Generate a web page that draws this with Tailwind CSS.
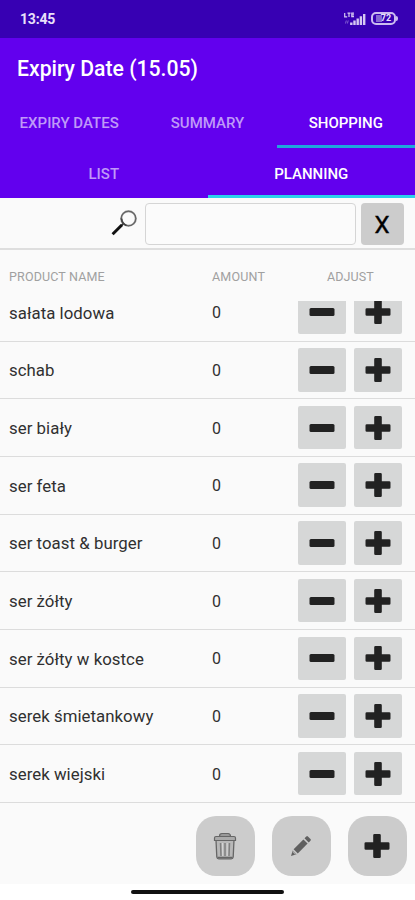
<!DOCTYPE html>
<html lang="pl">
<head>
<meta charset="utf-8">
<title>Expiry Date</title>
<script src="https://cdn.jsdelivr.net/npm/@tailwindcss/browser@4"></script>
</head>
<body class="w-[415px] h-[900px] overflow-hidden bg-white font-['Roboto',sans-serif] text-[#303030]">
<svg class="hidden">
  <symbol id="minus" viewBox="0 0 26 26"><rect x="0.5" y="9" width="25" height="8" rx="1.5" fill="#222"/></symbol>
  <symbol id="plus" viewBox="0 0 26 26"><path d="M10.5 1h5q1.3 0 1.3 1.3V9.200h7.400q1.300 0 1.300 1.300v5q0 1.300-1.300 1.300h-7.400v6.900q0 1.300-1.300 1.300h-5q-1.300 0-1.300-1.300v-6.900H1.800q-1.300 0-1.300-1.300v-5q0-1.300 1.300-1.300h7.400V2.300Q9.200 1 10.500 1z" fill="#222"/></symbol>
</svg>
<div class="flex flex-col h-[900px]">
  <div class="h-[37.500px] shrink-0 bg-[#3700b3] flex items-center justify-between pl-5 pr-[17px] text-[#e9e0fa]">
    <span class="text-[14px] leading-4 font-bold tracking-[-.2px]">13:45</span>
    <div class="flex items-center gap-[5px]">
      <svg class="w-[22px] h-[14px]" viewBox="0 0 22 14" fill="none" stroke="#d6c8f2">
        <path d="M.7 1v3.800h2.500M3.500 1.200h3M5 1v4M10 1.200H7.800v3.400H10M7.800 2.900H10" stroke-width="1.200"/>
        <path d="M1.500 11.500l.8-3M3.400 11.500l.8-3" stroke-width=".8" opacity=".6"/>
        <path d="M7.300 13v-2.500M10.500 13V8.500M13.700 13V6.500M16.900 13V4.300M20.200 13V2" stroke-width="2.400"/>
      </svg>
      <div class="flex items-center">
        <div class="w-[25px] h-[13px] rounded-[5px] border-2 border-[#cbbcf0] bg-[#3700b3] flex items-center justify-center text-[9px] leading-none font-bold"><span class="w-[6px] h-[7px] bg-[#8568d0] -mr-px"></span>72</div>
        <div class="w-[2px] h-[5px] bg-[#cbbcf0] rounded-r-sm"></div>
      </div>
    </div>
  </div>
  <div class="h-[60.500px] shrink-0 bg-[#6200ee] flex items-center pl-[17px] pt-[3px] text-white text-[21.200px] font-medium">Expiry Date (15.05)</div>
  <div class="h-[50px] shrink-0 bg-[#6200ee] grid grid-cols-3 text-center text-[15px] font-medium text-[#bf99f8]">
    <div class="flex items-center justify-center pt-px">EXPIRY DATES</div><div class="flex items-center justify-center pt-px">SUMMARY</div>
    <div class="h-[50px] pt-[4px] flex items-center justify-center text-white border-b-3 border-[#1fa8dc]">SHOPPING</div>
  </div>
  <div class="h-[50px] shrink-0 bg-[#6200ee] grid grid-cols-2 text-center text-[15px] font-medium text-[#bf99f8]">
    <div class="flex items-center justify-center pt-[2px]">LIST</div>
    <div class="h-[50px] pt-[5px] flex items-center justify-center text-white border-b-3 border-[#2bd2ea]">PLANNING</div>
  </div>
  <div class="h-[52px] shrink-0 bg-[#fafafa] border-b-2 border-[#dedede] flex items-start pt-[4.500px] pl-[111px]">
    <svg class="w-[26px] h-[28px] mt-[6px]" viewBox="0 0 26 28" fill="none">
      <circle cx="17.500" cy="9.500" r="7.300" stroke="#888" stroke-width="2"/>
      <circle cx="17.500" cy="9.500" r="7.300" stroke="#444" stroke-width=".6"/>
      <path d="M10.500 9.500q.5 5 5 7" stroke="#444" stroke-width="1.800"/>
      <path d="M12 15l-1.500 1.500" stroke="#333" stroke-width="2"/>
      <path d="M10.800 16L1.600 25.200" stroke="#111" stroke-width="3"/>
    </svg>
    <div class="ml-2 w-[211px] h-[42px] border-[1.500px] border-[#d5d5d5] rounded-[4px] bg-[#fbfbfb]"></div>
    <div class="ml-[4.500px] w-[43px] h-[42px] rounded-[4px] bg-[#cccccc] text-black text-[24px] leading-[44px] text-center [-webkit-text-stroke:.4px_#000]">X</div>
  </div>
  <div class="h-[51px] shrink-0 bg-[#fafafa] grid grid-cols-[203px_115px_1fr] pl-[9px] text-[12.500px] leading-[53px] text-[#a0a0a0]">
    <span class="tracking-[.15px]">PRODUCT NAME</span><span class="tracking-[.2px]">AMOUNT</span><span class="tracking-[.1px]">ADJUST</span>
  </div>
  <div id="rows" class="h-[502px] shrink-0 bg-[#fafafa] overflow-hidden flex flex-col justify-end text-[16.800px]"></div>
  <div class="h-[81px] shrink-0 bg-[#fafafa] flex items-start pt-[13px] pl-[195.500px] gap-[16.500px]">
    <div class="w-[59.500px] h-[59.500px] rounded-[20px] bg-[#cccccc] flex items-center justify-center">
      <svg class="w-[24px] h-[28px]" viewBox="0 0 24 28" fill="none" stroke="#666">
        <path d="M6.500 4.500Q6.500 1.500 9 1.500h6q2.500 0 2.500 3" fill="#999" stroke-width="1.200"/>
        <path d="M3 8h18l-.8 17q-.2 1.800-2 1.800H5.800q-1.800 0-2-1.800z" fill="#b8b8b8" stroke-width="1.300"/>
        <path d="M1.500 8.500V6q0-1.500 1.500-1.500h18q1.500 0 1.500 1.500v2.500z" fill="#aaa" stroke-width="1.200"/>
        <path d="M7.500 11l.5 13M12 11v13M16.500 11l-.5 13" stroke="#808080" stroke-width="1.500"/>
        <path d="M9.500 11l.2 13M14.200 11v13" stroke="#ddd" stroke-width=".8"/>
        <path d="M4.500 25.500h15" stroke-width="1.500"/>
      </svg>
    </div>
    <div class="w-[59.500px] h-[59.500px] rounded-[20px] bg-[#cccccc] flex items-center justify-center">
      <svg class="w-[22px] h-[22px]" viewBox="0 0 22 22" fill="#606060">
        <path d="M1 21l1.700-5.500 3.800 3.800z"/><path d="M3.600 14.200L13.400 4.400l4.200 4.200L7.800 18.400z"/><path d="M14.500 3.300l1.800-1.800q.8-.8 1.600 0l2.600 2.600q.8.800 0 1.600l-1.800 1.800z"/>
        <path d="M2.500 17l2.500 2.500 1.500-.3-3.700-3.600z" fill="#aaa"/>
      </svg>
    </div>
    <div class="w-[59.500px] h-[59.500px] rounded-[20px] bg-[#cccccc] flex items-center justify-center"><svg class="w-[26px] h-[26px]"><use href="#plus"/></svg></div>
  </div>
  <div class="grow bg-white flex justify-center pt-[6px]"><div class="w-[153px] h-[3.500px] rounded-full bg-[#111]"></div></div>
</div>
<script>
  const items = ['sałata lodowa', 'schab', 'ser biały', 'ser feta', 'ser toast & burger', 'ser żółty', 'ser żółty w kostce', 'serek śmietankowy', 'serek wiejski'];
  const button = icon => `<div class="w-[48px] h-[43.500px] rounded-[2px] bg-[#d6d7d7] flex items-center justify-center"><svg class="w-[26px] h-[26px]"><use href="#${icon}"/></svg></div>`;
  document.getElementById('rows').innerHTML = items.map(name => `
    <div class="h-[57.700px] shrink-0 border-b-[1.500px] border-[#dcdcdc] grid grid-cols-[203px_86px_48px_48px] items-center pl-[9px]">
      <span class="pt-[2px] tracking-[.05px]">${name.replace('&', '&amp;')}</span><span class="pt-[2px] text-[16px]">0</span>${button('minus')}<div class="pl-[8px]">${button('plus')}</div>
    </div>`).join('');
</script>
</body>
</html>
